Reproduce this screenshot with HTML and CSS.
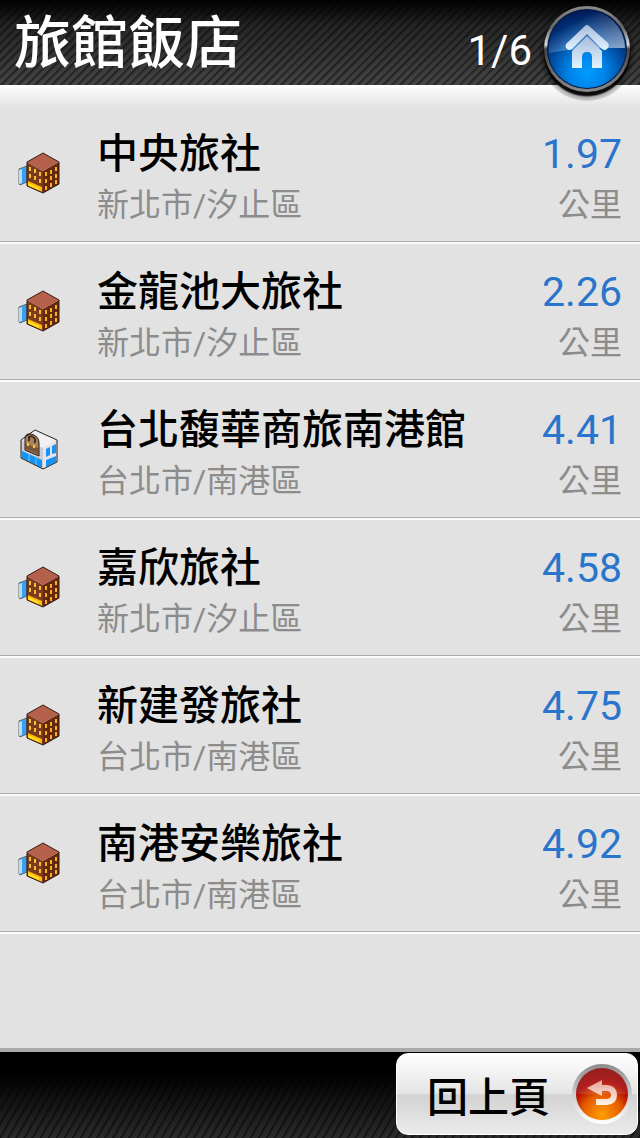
FILE: index.html
```html
<!DOCTYPE html>
<html lang="zh-Hant">
<head>
    <meta charset="UTF-8">
    <meta name="viewport" content="width=device-width, initial-scale=1.0">
    <title>旅館飯店</title>
    <link rel="stylesheet" href="styles.css">
</head>
<body>
    <!-- Shared icons -->
    <svg class="icon-defs" aria-hidden="true">
        <symbol id="icon-hotel" viewBox="0 0 60 60">
            <path d="M9 29 L17 26 V42 L10 45 L9 44Z" fill="#3aa0ee" stroke="#666" stroke-width="1"/>
            <path d="M9 30 L12 29 V43 L9 44Z" fill="#b9dcf5"/>
            <path d="M17 22 L33 31 V53 L17 46Z" fill="#7c3a20"/>
            <path d="M49 22 L33 31 V53 L49 44Z" fill="#64280f"/>
            <path d="M33 13 L49 22 L33 31 L17 22Z" fill="#b5604b"/>
            <path d="M18 41 L32 47 V52 L18 46Z" fill="#ffb900"/>
            <path d="M18 43 L29 48 V50 L18 45Z" fill="#ffe62a"/>
            <path d="M20 27v4 M25 29v4 M30 32v4 M20 34v4 M25 36v4 M30 39v4" stroke="#f5c02c" stroke-width="2"/>
            <path d="M36 32v4 M41 30v4 M46 27v4 M36 39v4 M41 36v4 M46 34v4 M36 46v4 M41 43v4 M46 40v4" stroke="#f8b01e" stroke-width="2"/>
            <path d="M33 13 L49 22 V44 L33 53 L17 46 V22Z" fill="none" stroke="#351c16" stroke-width="1"/>
        </symbol>
        <symbol id="icon-business" viewBox="0 0 60 60">
            <path d="M11 24 L25 14 L47 24 L33 32Z" fill="#f1f1f4"/>
            <path d="M11 24 L33 32 V53 L11 42Z" fill="#ccccd4"/>
            <path d="M47 24 L33 32 V53 L47 46Z" fill="#e4e4ea"/>
            <path d="M12 35 L32 44 V52 L12 42Z" fill="#1594f7"/>
            <path d="M19 38v7 M26 42v7" stroke="#79c6ff" stroke-width="1"/>
            <path d="M36 33 L40 31 V39 L36 41Z M42 30 L46 28 V37 L42 38Z M36 44 L46 40 V46 L36 51Z" fill="#1594f7"/>
            <path d="M15 34 V23 Q15 17 21 18 Q29 20 29 27 V40Z" fill="#a48262" stroke="#241a14" stroke-width="1"/>
            <path d="M16 28 L28 32 V38 L16 33Z" fill="#7b5539"/>
            <path d="M19 25v-4q3-2 6 2v4" fill="none" stroke="#4a2d1d" stroke-width="2"/>
            <path d="M18 27v3 M24 29v3" stroke="#ffc62e" stroke-width="2"/>
            <path d="M11 24 L25 14 L47 24 V46 L33 53 L11 42Z" fill="none" stroke="#222" stroke-width="1"/>
        </symbol>
    </svg>

    <header class="header">
        <h1>旅館飯店</h1>
        <span class="page-number">1/6</span>
        <a class="home-link" href="#" aria-label="首頁">
            <svg viewBox="0 0 96 100" aria-hidden="true">
                <defs>
                    <radialGradient id="home-blue" cx="50%" cy="80%" r="80%">
                        <stop offset="0" stop-color="#009cff"/>
                        <stop offset="0.3" stop-color="#0082e6"/>
                        <stop offset="0.65" stop-color="#00408f"/>
                        <stop offset="1" stop-color="#001a55"/>
                    </radialGradient>
                    <linearGradient id="home-ring" x1="0" y1="0" x2="0" y2="1">
                        <stop offset="0" stop-color="#8a8a8a"/>
                        <stop offset="0.25" stop-color="#666"/>
                        <stop offset="0.45" stop-color="#ddd"/>
                        <stop offset="0.5" stop-color="#444"/>
                        <stop offset="1" stop-color="#8c8c8c"/>
                    </linearGradient>
                    <linearGradient id="home-gloss" x1="0" y1="0" x2="1" y2="1">
                        <stop offset="0.3" stop-color="#fff" stop-opacity="0"/>
                        <stop offset="1" stop-color="#fff" stop-opacity="0.6"/>
                    </linearGradient>
                    <linearGradient id="home-white" x1="0" y1="0" x2="0" y2="1">
                        <stop offset="0" stop-color="#a8bbd8"/>
                        <stop offset="1" stop-color="#e2f3ff"/>
                    </linearGradient>
                    <radialGradient id="home-shadow">
                        <stop offset="0.88" stop-color="#000" stop-opacity="0.95"/>
                        <stop offset="0.92" stop-color="#000" stop-opacity="0.3"/>
                        <stop offset="1" stop-color="#000" stop-opacity="0.1"/>
                    </radialGradient>
                </defs>
                <circle cx="48" cy="52" r="48" fill="url(#home-shadow)"/>
                <circle cx="48" cy="48" r="43" fill="url(#home-ring)"/>
                <circle cx="48" cy="48" r="40" fill="#001840"/>
                <circle cx="48" cy="48" r="39" fill="url(#home-blue)"/>
                <path d="M10 48 A38 38 0 0 1 86 47 H66 Q36 47 10 52Z" fill="url(#home-gloss)"/>
                <path d="M28 42 L46 25 Q48 23 50 25 L69 42 Q71 45 68 48 Q66 50 63 48 L48 33 L33 48 Q30 50 28 48 Q25 45 28 42Z" fill="url(#home-white)"/>
                <path d="M48 35 L63 50 V67 H53 V56 Q53 51 48 51 Q43 51 43 56 V67 H33 V50Z" fill="url(#home-white)"/>
            </svg>
        </a>
    </header>

    <main class="content">
        <ul class="hotel-list">
            <li class="hotel">
                <svg class="hotel-icon" aria-hidden="true"><use href="#icon-hotel"/></svg>
                <div class="hotel-info">
                    <h2>中央旅社</h2>
                    <p>新北市/汐止區</p>
                </div>
                <div class="distance">
                    <strong>1.97</strong>
                    <span>公里</span>
                </div>
            </li>
            <li class="hotel">
                <svg class="hotel-icon" aria-hidden="true"><use href="#icon-hotel"/></svg>
                <div class="hotel-info">
                    <h2>金龍池大旅社</h2>
                    <p>新北市/汐止區</p>
                </div>
                <div class="distance">
                    <strong>2.26</strong>
                    <span>公里</span>
                </div>
            </li>
            <li class="hotel">
                <svg class="hotel-icon" aria-hidden="true"><use href="#icon-business"/></svg>
                <div class="hotel-info">
                    <h2>台北馥華商旅南港館</h2>
                    <p>台北市/南港區</p>
                </div>
                <div class="distance">
                    <strong>4.41</strong>
                    <span>公里</span>
                </div>
            </li>
            <li class="hotel">
                <svg class="hotel-icon" aria-hidden="true"><use href="#icon-hotel"/></svg>
                <div class="hotel-info">
                    <h2>嘉欣旅社</h2>
                    <p>新北市/汐止區</p>
                </div>
                <div class="distance">
                    <strong>4.58</strong>
                    <span>公里</span>
                </div>
            </li>
            <li class="hotel">
                <svg class="hotel-icon" aria-hidden="true"><use href="#icon-hotel"/></svg>
                <div class="hotel-info">
                    <h2>新建發旅社</h2>
                    <p>台北市/南港區</p>
                </div>
                <div class="distance">
                    <strong>4.75</strong>
                    <span>公里</span>
                </div>
            </li>
            <li class="hotel">
                <svg class="hotel-icon" aria-hidden="true"><use href="#icon-hotel"/></svg>
                <div class="hotel-info">
                    <h2>南港安樂旅社</h2>
                    <p>台北市/南港區</p>
                </div>
                <div class="distance">
                    <strong>4.92</strong>
                    <span>公里</span>
                </div>
            </li>
        </ul>
    </main>

    <footer class="footer">
        <button class="back-button" type="button">
            回上頁
            <svg viewBox="0 0 60 62" aria-hidden="true">
                <defs>
                    <linearGradient id="back-ring" x1="0" y1="0" x2="0" y2="1">
                        <stop offset="0" stop-color="#8c8c8c"/>
                        <stop offset="0.5" stop-color="#ccc"/>
                        <stop offset="1" stop-color="#fff"/>
                    </linearGradient>
                    <radialGradient id="back-red" cx="50%" cy="90%" r="85%">
                        <stop offset="0" stop-color="#ffa000"/>
                        <stop offset="0.45" stop-color="#e65a00"/>
                        <stop offset="0.75" stop-color="#a80000"/>
                        <stop offset="1" stop-color="#8c0000"/>
                    </radialGradient>
                    <linearGradient id="back-arrow" x1="0" y1="0" x2="0" y2="1">
                        <stop offset="0" stop-color="#e6a49a"/>
                        <stop offset="1" stop-color="#fff5e8"/>
                    </linearGradient>
                </defs>
                <circle cx="30" cy="31" r="30" fill="url(#back-ring)"/>
                <circle cx="30" cy="31" r="26" fill="url(#back-red)"/>
                <path d="M4 31 A26 26 0 0 1 56 31Z" fill="#fff" fill-opacity="0.12"/>
                <path d="M15 25 L30 17 V22 H35 Q45 23 45 32 Q45 41 35 42 H24 V36 H34 Q39 36 39 32 Q39 28 34 28 H30 V33Z" fill="url(#back-arrow)"/>
            </svg>
        </button>
    </footer>
</body>
</html>
```

FILE: styles.css
```css
* {
    box-sizing: border-box;
}

body {
    display: flex;
    flex-direction: column;
    min-height: 100vh;
    margin: 0;
    font-family: Roboto, "Noto Sans CJK TC", sans-serif;
    background-color: #e2e2e2;
    color: #000;
}

h1,
h2,
p {
    margin: 0;
}

.icon-defs {
    position: absolute;
    width: 0;
    height: 0;
}

/* Header */
.header {
    position: relative;
    display: flex;
    align-items: center;
    justify-content: space-between;
    height: 85px;
    padding: 2px 108px 0 14px;
    color: #fff;
    background:
        linear-gradient(rgba(0, 0, 0, 1), rgba(0, 0, 0, 0.45) 30%, rgba(0, 0, 0, 0)),
        repeating-linear-gradient(135deg, #262626 0, #262626 1px, #444 3px, #444 6px);
}

.header h1 {
    font-size: 57px;
    font-weight: 500;
    line-height: 82px;
}

.page-number {
    padding-top: 14px;
    font-size: 42px;
    line-height: 48px;
}

.home-link {
    position: absolute;
    top: 1px;
    right: 5px;
    width: 96px;
    height: 100px;
}

.home-link svg {
    display: block;
    width: 100%;
    height: 100%;
}

/* Hotel list */
.content {
    flex: 1;
    padding-top: 20px;
    background: linear-gradient(#fff, #f4f4f4 8px, #e2e2e2 24px);
    border-bottom: 4px solid #aaa;
}

.hotel-list {
    margin: 0;
    padding: 0;
    list-style: none;
}

.hotel {
    display: flex;
    align-items: flex-start;
    padding: 24px 18px 10px 10px;
    border-bottom: 1px solid #aaa;
    box-shadow: 0 2px 0 #fafafa;
    margin-bottom: 1px;
}

.hotel-icon {
    width: 60px;
    height: 60px;
    margin: 11px 27px 0 0;
}

.hotel-info {
    flex: 1;
}

.hotel-info h2 {
    font-size: 41px;
    font-weight: 500;
    line-height: 50px;
}

.hotel-info p,
.distance span {
    color: #8c8c8c;
    font-size: 32px;
    line-height: 52px;
}

.distance {
    display: flex;
    flex-direction: column;
    align-items: flex-end;
}

.distance strong {
    color: #2a75cc;
    font-size: 41px;
    font-weight: 400;
    line-height: 50px;
}

/* Footer */
.footer {
    display: flex;
    justify-content: flex-end;
    padding: 1px 2px 3px;
    background:
        linear-gradient(#000 25%, rgba(0, 0, 0, 0.2)),
        repeating-linear-gradient(120deg, #1c1c1c 0, #1c1c1c 1px, #363636 3px, #363636 7px);
}

.back-button {
    display: flex;
    align-items: center;
    justify-content: space-between;
    width: 242px;
    height: 82px;
    padding: 0 5px 0 30px;
    border: 1px solid #fff;
    border-radius: 12px;
    background: linear-gradient(#fff, #e4e4e4 50%, #d2d2d2 51%, #ebebeb);
    color: #000;
    font-family: inherit;
    font-size: 41px;
    font-weight: 500;
    cursor: pointer;
}

.back-button svg {
    width: 60px;
    height: 62px;
}
```
